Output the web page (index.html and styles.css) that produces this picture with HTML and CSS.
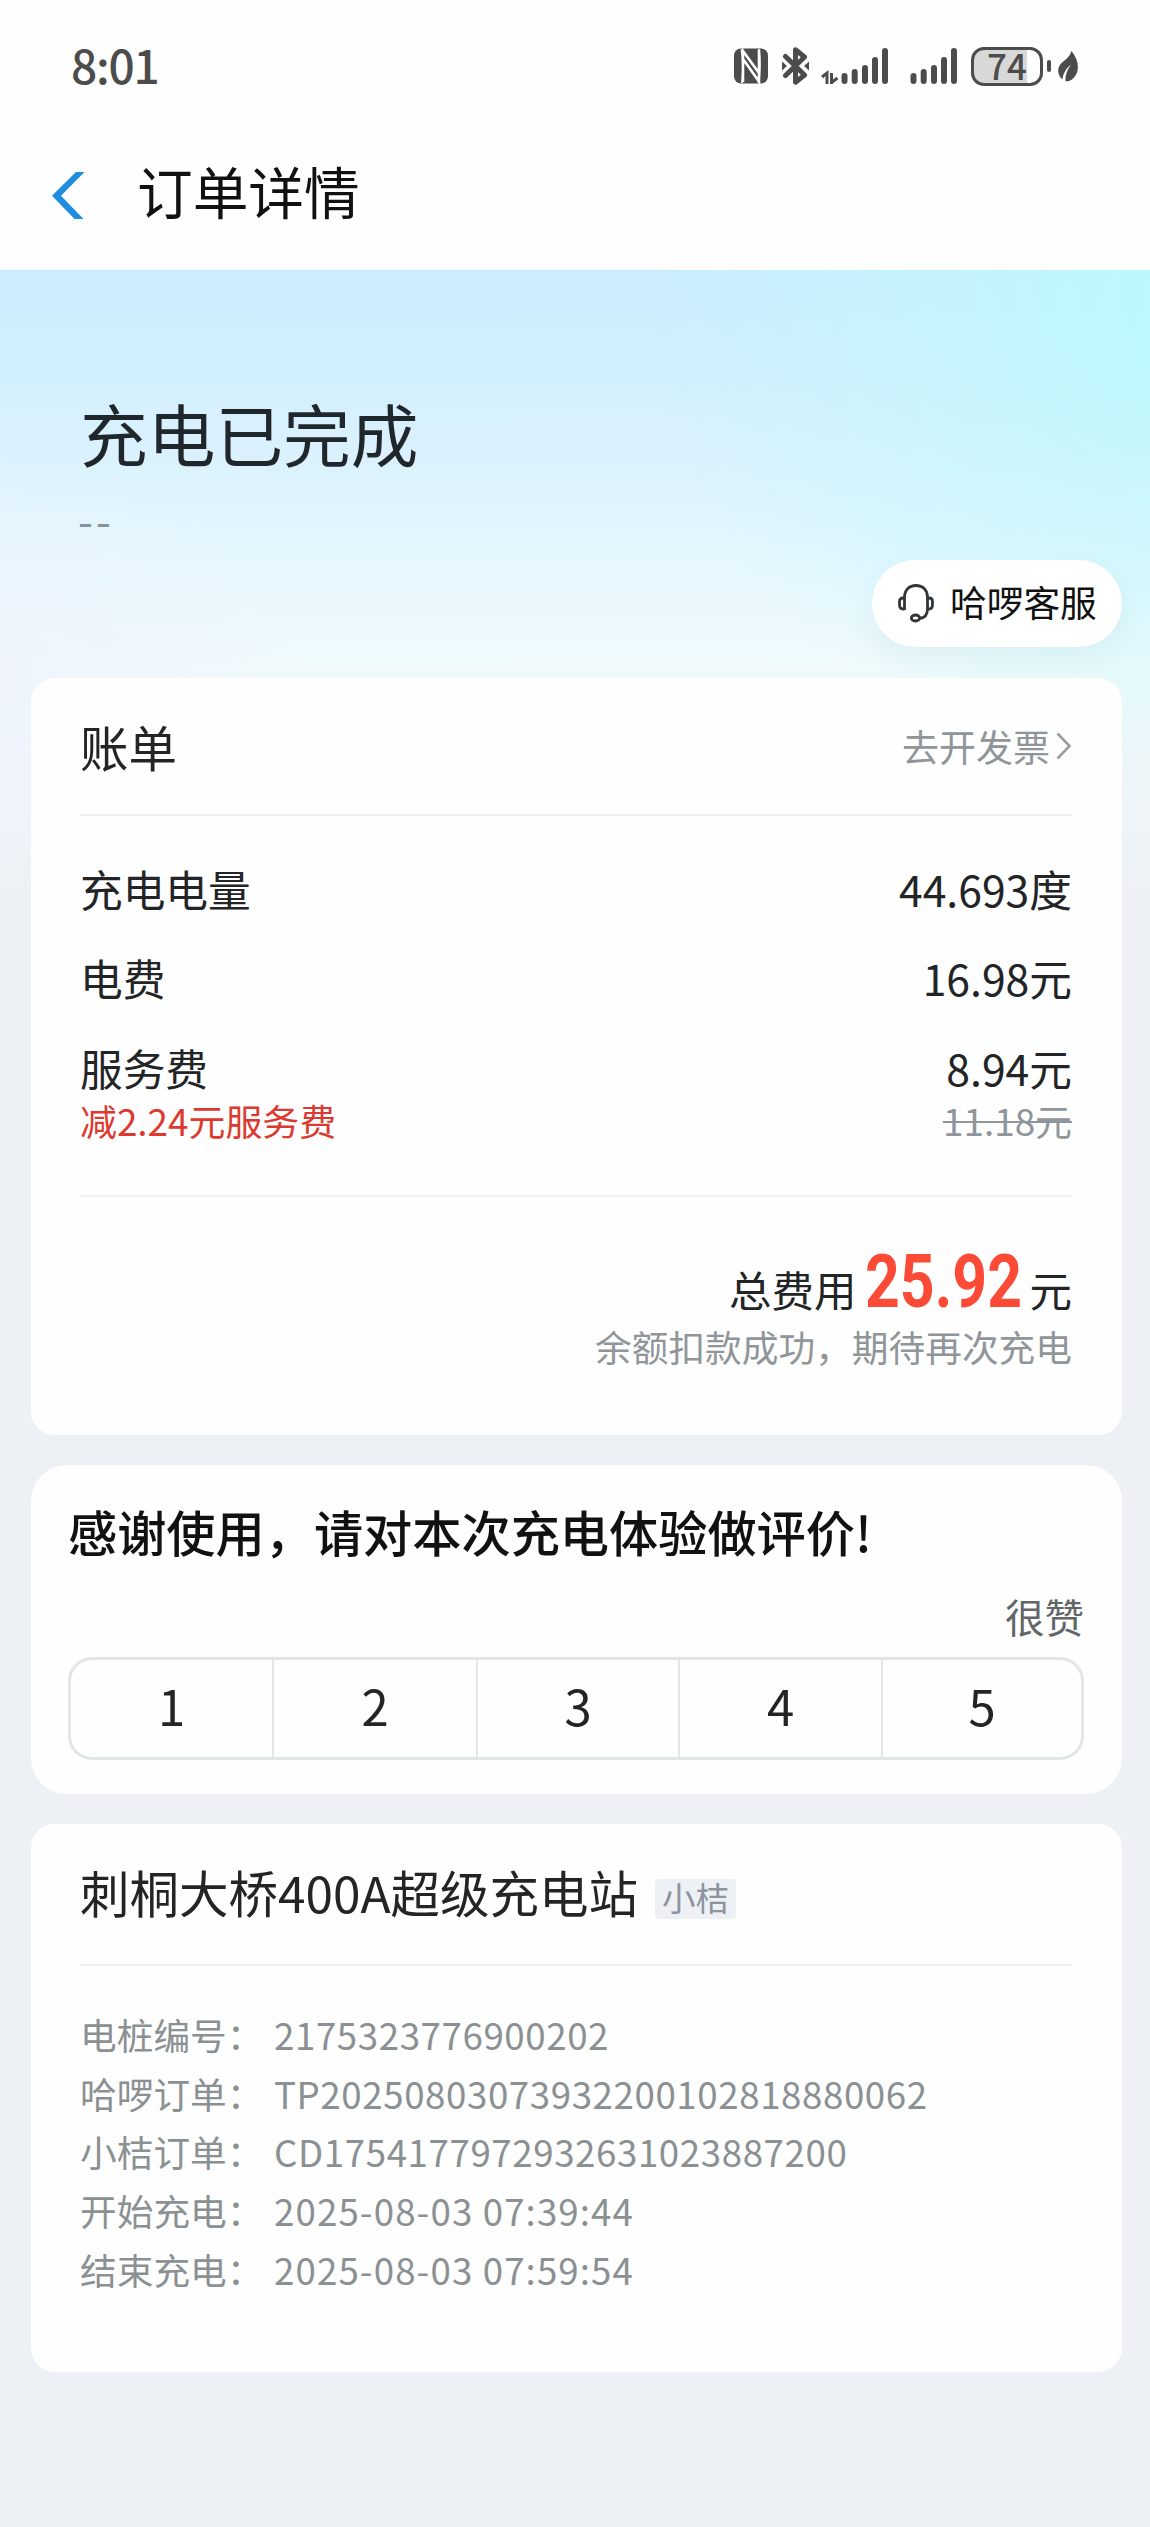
FILE: index.html
```html
<!DOCTYPE html>
<html lang="zh-CN">
<head>
<meta charset="utf-8">
<title>订单详情</title>
<link rel="stylesheet" href="styles.css">
</head>
<body>
<header class="top">
  <div class="status">
    <span class="clock">8:01</span>
    <div class="indicators">
      <svg class="nfc" width="34" height="36" viewBox="0 0 34 36">
        <rect x="0" y="0.5" width="34" height="35" rx="7" fill="#4c4c4c"/>
        <path d="M9 34V3l16 22V2M9 11l16 22.500V10" fill="none" stroke="#fff" stroke-width="2.600"/>
        <path d="M7.500 1.500Q10 17 8 35M25 1q2 17-.5 34" fill="none" stroke="#fff" stroke-width="1.800"/>
      </svg>
      <svg class="bluetooth" width="27" height="38" viewBox="0 0 27 38">
        <path d="M3.500 9.500L22.500 28l-9 7.200V2.800l9 7.200L3.500 28.500" fill="none" stroke="#4c4c4c" stroke-width="5" stroke-linejoin="round" stroke-linecap="round"/>
        <path d="M0 14.500l5 4.500L0 23.500zM27 14.500L22 19l5 4.500z" fill="#4c4c4c"/>
      </svg>
      <svg class="signal-data" width="68" height="38" viewBox="0 0 68 38">
        <path d="M1 30l5-4v11M10.500 26v11M10.500 35.500l6-4.500" fill="none" stroke="#4c4c4c" stroke-width="3"/>
        <path d="M23.500 29v5M33.700 25v9M44 21v13M54 13v21M64 4v30" stroke="#4c4c4c" stroke-width="6" stroke-linecap="round"/>
      </svg>
      <svg class="signal" width="48" height="38" viewBox="0 0 48 38">
        <path d="M3.500 29v5M13.700 25v9M24 21v13M34 13v21M44 4v30" stroke="#4c4c4c" stroke-width="6" stroke-linecap="round"/>
      </svg>
      <span class="battery">74</span>
      <span class="battery-tip"></span>
      <svg class="leaf" width="20" height="31" viewBox="0 0 20 31">
        <path d="M13.500 0C21 9 22 20 16 26.500c-3 3.500-6 4-8.500 3.800C7 25 9 19 13 13.500 7.500 18 5 23 4.500 28.500-1 24-1 17 3 12.500 7 9 11 7 13.500 0z" fill="#4c4c4c"/>
      </svg>
    </div>
  </div>
  <nav class="titlebar">
    <svg class="back" width="34" height="47" viewBox="0 0 34 47">
      <path d="M24 0h8.500L9 23.700 31.500 47H22.500L0 23.700z" fill="#1f8de0"/>
    </svg>
    <h1 class="page-title">订单详情</h1>
  </nav>
</header>
<main class="content">
  <h2 class="state">充电已完成</h2>
  <p class="state-note">--</p>
  <a class="service">
    <svg width="36" height="40" viewBox="0 0 36 40" fill="none" stroke="#333639" stroke-width="2.800">
      <path d="M6.500 27V14.500C6.500 7 11 2.500 18 2.500S29.500 7 29.500 14.500V26c0 6-2.500 9-8 9.500"/>
      <path d="M6.500 15H5c-2.500 0-3.500 1.500-3.500 3.500v3C1.500 24 2.500 26 5 26h1.500M29.500 15H31c2.500 0 3.500 1.500 3.500 3.500v3c0 2.500-1 4.500-3.500 4.500h-1.500"/>
      <ellipse cx="17.500" cy="35" rx="4.200" ry="3"/>
    </svg>
    <span>哈啰客服</span>
  </a>

  <section class="card bill">
    <div class="bill-head">
      <h3 class="card-title">账单</h3>
      <a class="invoice">去开发票
        <svg width="16" height="28" viewBox="0 0 16 28"><path d="M1.500 1.500L13.500 14 1.500 26.500" fill="none" stroke="#989ea2" stroke-width="2.600"/></svg>
      </a>
    </div>
    <div class="fees">
      <div class="fee"><span>充电电量</span><span>44.693度</span></div>
      <div class="fee"><span>电费</span><span>16.98元</span></div>
      <div class="fee"><span>服务费</span><span>8.94元</span></div>
      <div class="fee-sub"><span class="discount">减2.24元服务费</span><s class="original">11.18元</s></div>
    </div>
    <div class="total"><span>总费用</span><strong class="amount"><span class="amount-text">25.92</span></strong><span>元</span></div>
    <p class="total-note">余额扣款成功，期待再次充电</p>
  </section>

  <section class="card rating">
    <h3 class="rating-title">感谢使用，请对本次充电体验做评价!</h3>
    <p class="rating-hint">很赞</p>
    <div class="scores">
      <span class="score">1</span><span class="score">2</span><span class="score">3</span><span class="score">4</span><span class="score">5</span>
    </div>
  </section>

  <section class="card station">
    <div class="station-head">
      <h3 class="station-name">刺桐大桥400A超级充电站</h3>
      <span class="tag">小桔</span>
    </div>
    <dl class="details">
      <div class="detail"><dt>电桩编号：</dt><dd>2175323776900202</dd></div>
      <div class="detail"><dt>哈啰订单：</dt><dd>TP20250803073932200102818880062</dd></div>
      <div class="detail"><dt>小桔订单：</dt><dd>CD1754177972932631023887200</dd></div>
      <div class="detail"><dt>开始充电：</dt><dd class="time">2025-08-03 07:39:44</dd></div>
      <div class="detail"><dt>结束充电：</dt><dd class="time">2025-08-03 07:59:54</dd></div>
    </dl>
  </section>
</main>
</body>
</html>
```
FILE: styles.css
```css
* { box-sizing: border-box; margin: 0; padding: 0; }
body {
  font-family: "Noto Sans CJK SC", sans-serif;
  color: #222426;
  background: #edf1f6;
  white-space: nowrap;
}
h1, h2, h3 { font-weight: 400; }
svg { display: block; flex: none; }

/* status bar and title */
.top { height: 270px; background: #fefefe; }
.status {
  height: 132px;
  padding: 0 72px 0 71px;
  display: flex;
  justify-content: space-between;
  align-items: center;
}
.clock { font-size: 46px; line-height: 60px; margin-top: -5px; letter-spacing: -1.200px; color: #4c4c4c; font-weight: 500; }
.indicators { display: flex; align-items: center; }
.bluetooth { margin-left: 14px; }
.signal-data { margin-left: 12px; }
.signal { margin-left: 21px; }
.battery {
  width: 72px;
  height: 39px;
  margin-left: 13px;
  border: 3px solid #4c4c4c;
  border-radius: 13px;
  background: linear-gradient(90deg, #d8d8d8 53px, #fefefe 53px);
  color: #4c4c4c;
  font-size: 35px;
  font-weight: 500;
  line-height: 29px;
  text-align: center;
}
.battery-tip { width: 4px; height: 12px; margin-left: 4px; border-radius: 2px; background: #4c4c4c; }
.leaf { margin-left: 7px; }
.titlebar { height: 138px; padding: 0 0 22px 52px; display: flex; align-items: center; gap: 51px; }
.back { margin-top: 10px; }
.page-title { font-size: 55.700px; line-height: 70px; color: #111; }

/* page body */
.content {
  min-height: 2257px;
  padding: 122px 28px 100px 31px;
  display: flex;
  flex-direction: column;
  background:
    radial-gradient(ellipse 560px 480px at 1210px 40px, #b9f9fb 0%, rgba(190, 248, 252, .6) 40%, rgba(205, 246, 253, 0) 100%),
    radial-gradient(ellipse 340px 220px at -40px 400px, rgba(240, 243, 254, .8) 0%, rgba(240, 243, 254, 0) 100%),
    linear-gradient(180deg, #caecfe 0, #d2effd 100px, #dcf2fd 200px, #e6f7fe 300px, #f0fafc 400px, #edf1f6 620px);
}
.state { margin-left: 49px; font-size: 67.700px; line-height: 80px; color: #1f272c; }
.state-note { margin: 22px 0 0 47px; font-size: 43px; line-height: 50px; letter-spacing: 3px; color: #87939a; }
.service {
  align-self: flex-end;
  width: 250px;
  height: 87px;
  margin-top: 16px;
  padding: 0 0 2px 26px;
  display: flex;
  align-items: center;
  gap: 16px;
  border-radius: 44px;
  background: #fff;
  box-shadow: 0 10px 24px rgba(90, 110, 120, .06);
  font-size: 36.700px;
  line-height: 50px;
  color: #111;
}
.service span { margin-top: -4px; }
.card { margin-top: 30px; border-radius: 24px; background: #fefefe; }

/* bill */
.bill { height: 757px; margin-top: 31px; padding: 0 50px 0 49px; }
.bill-head {
  height: 138px;
  display: flex;
  justify-content: space-between;
  align-items: center;
  border-bottom: 2px solid #eff1f2;
}
.card-title { font-size: 48.500px; line-height: 60px; }
.invoice { display: flex; align-items: center; gap: 6px; font-size: 37px; line-height: 50px; color: #8f9599; }
.fees { padding: 27px 0 50px; border-bottom: 2px solid #eff1f2; }
.fee { height: 89.500px; display: flex; justify-content: space-between; align-items: center; font-size: 42.700px; line-height: 50px; }
.fee-sub { height: 50px; margin-top: -17px; display: flex; justify-content: space-between; font-size: 36.900px; line-height: 50px; }
.discount { color: #dc3a30; }
.original { color: #8f9599; text-decoration-thickness: 2px; }
.total { height: 67px; margin-top: 54px; display: flex; justify-content: flex-end; align-items: baseline; font-size: 42.500px; line-height: 50px; }
.amount { width: 156px; margin: 0 8px 0 9px; font: 700 75px/60px Roboto, sans-serif; color: #fb4b37; }
.amount-text { display: inline-block; transform: scaleX(.81); transform-origin: left; }
.total-note { margin-top: 3px; font-size: 36.700px; line-height: 50px; text-align: right; color: #8f9599; }

/* rating */
.rating { height: 329px; padding: 36px 38px 0 37px; border-radius: 36px; }
.rating-title { font-size: 49.200px; font-weight: 500; line-height: 60px; color: #111; }
.rating-hint { margin-top: 30px; font-size: 39.500px; line-height: 50px; text-align: right; color: #626669; }
.scores { height: 103px; margin-top: 16px; display: grid; grid-template-columns: 201px 204px 202px 203px 1fr; border: 3px solid #e3e6e7; border-radius: 24px; }
.score { padding-bottom: 8px; display: flex; align-items: center; justify-content: center; font-size: 49px; line-height: 60px; }
.score + .score { border-left: 2px solid #e3e6e7; }

/* station */
.station { height: 548px; padding: 0 50px 0 49px; }
.station-head { height: 142px; padding-bottom: 4px; display: flex; align-items: center; gap: 17px; border-bottom: 2px solid #eff1f2; }
.station-name { font-size: 49.500px; line-height: 60px; }
.tag { height: 40px; margin-top: 14px; padding: 0 7px; border-radius: 4px; background: #edf0f5; font-size: 33.500px; line-height: 36px; color: #8d949d; }
.details { margin-top: 39px; font-size: 36.700px; line-height: 58.700px; color: #8b9093; }
.detail { display: flex; }
.detail dt { width: 194px; }
.detail dd { letter-spacing: .58px; }
.detail .time { letter-spacing: 1.100px; }
```
